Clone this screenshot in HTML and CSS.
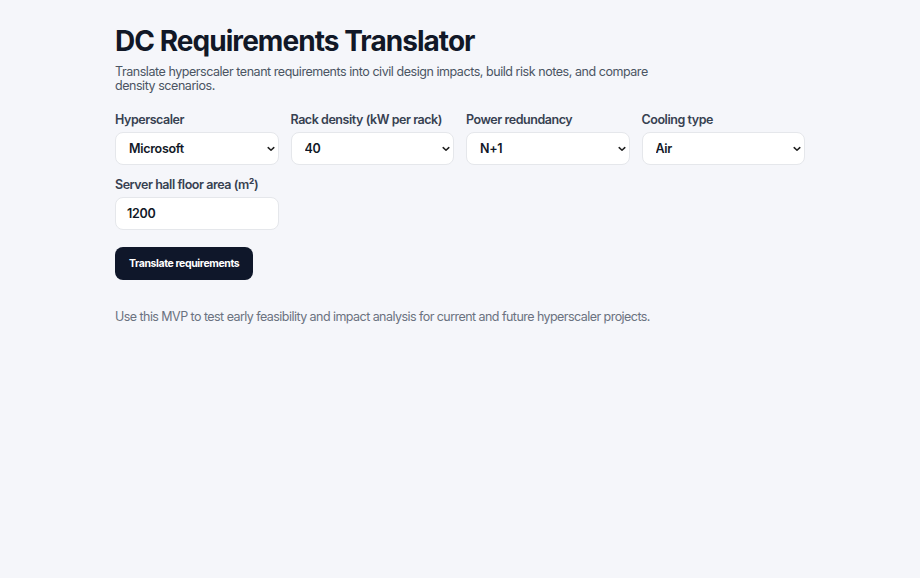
FILE: index.html
```html
<!DOCTYPE html>
<html lang="en">
<head>
    <meta charset="UTF-8">
    <meta name="viewport" content="width=device-width, initial-scale=1.0">
    <title>DC Requirements Translator</title>
    <link rel="stylesheet" href="styles.css">
</head>
<body>
    <main class="container">
        <h1 class="title">DC Requirements Translator</h1>
        <p class="subtitle">Translate hyperscaler tenant requirements into civil design impacts, build risk notes, and compare density scenarios.</p>

        <form class="form" onsubmit="return false">
            <div class="grid">
                <div class="field">
                    <label for="hyperscaler">Hyperscaler</label>
                    <select id="hyperscaler">
                        <option>Microsoft</option>
                        <option>AWS</option>
                        <option>Google</option>
                        <option>Meta</option>
                    </select>
                </div>
                <div class="field">
                    <label for="density">Rack density (kW per rack)</label>
                    <select id="density">
                        <option>40</option>
                        <option>20</option>
                        <option>80</option>
                    </select>
                </div>
                <div class="field">
                    <label for="redundancy">Power redundancy</label>
                    <select id="redundancy">
                        <option>N+1</option>
                        <option>2N</option>
                    </select>
                </div>
                <div class="field">
                    <label for="cooling">Cooling type</label>
                    <select id="cooling">
                        <option>Air</option>
                        <option>Liquid</option>
                    </select>
                </div>
                <div class="field">
                    <label for="area">Server hall floor area (m²)</label>
                    <input id="area" type="number" value="1200">
                </div>
            </div>

            <button type="submit" class="submit">Translate requirements</button>
        </form>

        <p class="note">Use this MVP to test early feasibility and impact analysis for current and future hyperscaler projects.</p>
    </main>
</body>
</html>
```

FILE: styles.css
```css
* {
    margin: 0;
    padding: 0;
    box-sizing: border-box;
    font-family: Inter, "Noto Sans", sans-serif;
}

body {
    background-color: #f5f6fa;
    color: #111827;
}

.container {
    width: 690px;
    margin: 0 auto;
    padding-top: 24px;
}

.title {
    font-size: 28px;
    font-weight: 700;
    line-height: 34px;
    color: #111827;
    letter-spacing: -0.95px;
}

.subtitle {
    margin-top: 7px;
    max-width: 540px;
    font-size: 12.5px;
    line-height: 14px;
    color: #4b5563;
    letter-spacing: -0.45px;
}

.form {
    margin-top: 19px;
}

.grid {
    display: grid;
    grid-template-columns: repeat(4, minmax(0, 1fr));
    column-gap: 12px;
    row-gap: 12px;
}

.field {
    display: flex;
    flex-direction: column;
}

label {
    font-size: 12.5px;
    font-weight: 600;
    line-height: 16px;
    color: #374151;
    margin-bottom: 4px;
    letter-spacing: -0.45px;
    white-space: nowrap;
}

select,
input[type="number"] {
    width: 100%;
    height: 33px;
    padding: 0 20px 0 13px;
    background-color: #ffffff;
    border: 1px solid #e5e7eb;
    border-radius: 8px;
    font-size: 12.5px;
    font-weight: 600;
    color: #111827;
    letter-spacing: -0.3px;
    outline: none;
}

select {
    -webkit-appearance: none;
    appearance: none;
    background-image: url("data:image/svg+xml,%3Csvg xmlns='http://www.w3.org/2000/svg' width='8' height='6' viewBox='0 0 8 6'%3E%3Cpath d='M1.2 1.6 4 4.3 6.8 1.6' fill='none' stroke='%23222' stroke-width='1.5' stroke-linecap='round' stroke-linejoin='round'/%3E%3C/svg%3E");
    background-repeat: no-repeat;
    background-position: right 3px center;
}

input[type="number"] {
    padding: 0 11px;
    -moz-appearance: textfield;
}

    input[type="number"]::-webkit-outer-spin-button,
    input[type="number"]::-webkit-inner-spin-button {
        -webkit-appearance: none;
        margin: 0;
    }

.submit {
    margin-top: 17px;
    height: 33px;
    padding: 0 14px;
    background-color: #0f172a;
    color: #ffffff;
    border: none;
    border-radius: 8px;
    font-size: 10.5px;
    font-weight: 700;
    letter-spacing: -0.4px;
    cursor: pointer;
}

.note {
    margin-top: 29px;
    font-size: 12.5px;
    line-height: 16px;
    color: #6b7280;
    letter-spacing: -0.55px;
}
```
